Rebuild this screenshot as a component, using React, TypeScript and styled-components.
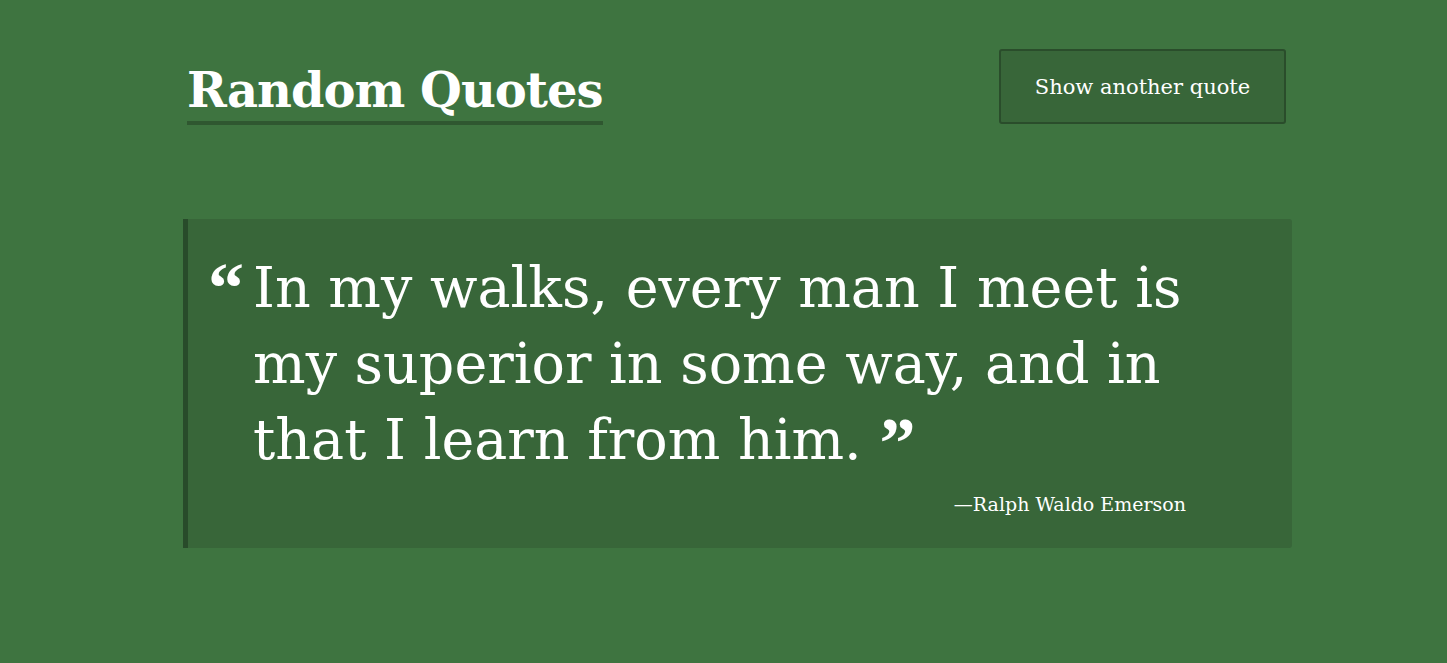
import React from "react";
import styled, { createGlobalStyle } from "styled-components";

const Global = createGlobalStyle`
  html, body { margin: 0; padding: 0; }
  body {
    background: #3e7440;
    color: #ffffff;
    font-family: "DejaVu Serif", "Liberation Serif", serif;
    min-height: 663px;
  }
`;

const Page = styled.div`
  width: 1109px;
  margin: 0 0 0 183px;
  padding-top: 49px;
  display: flex;
  flex-direction: column;
  gap: 94px;
`;

const Header = styled.header`
  display: flex;
  justify-content: space-between;
  align-items: flex-start;
  padding: 0 6px 0 4px;
`;

const Title = styled.h1`
  margin: 0;
  font-family: "DejaVu Serif", serif;
  font-weight: bold;
  font-size: 48px;
  line-height: 61px;
  letter-spacing: -1px;
  border-bottom: 4px solid #2f5730;
  padding-top: 11px;
`;

const Button = styled.button`
  width: 287px;
  height: 75px;
  background: #386639;
  border: 2px solid #2a4d2b;
  border-radius: 3px;
  color: #ffffff;
  font-family: "DejaVu Serif", serif;
  font-size: 21px;
  cursor: pointer;
`;

const Card = styled.blockquote`
  margin: 0;
  background: #386639;
  border-left: 5px solid #284b2a;
  border-radius: 0 3px 3px 0;
  padding: 31px 106px 33px 20px;
  display: flex;
  flex-direction: column;
`;

const QuoteRow = styled.div`
  display: flex;
  gap: 12px;
  align-items: flex-start;
`;

const Mark = styled.span`
  font-family: "Liberation Serif", serif;
  font-weight: bold;
  font-size: 72px;
  line-height: 76px;
  width: 33px;
  flex: none;
`;

const Text = styled.p`
  margin: 0;
  font-family: "DejaVu Serif", serif;
  font-size: 55.5px;
  line-height: 76px;
`;

const Close = styled.span`
  font-family: "Liberation Serif", serif;
  font-weight: bold;
  font-size: 72px;
  line-height: 66px;
  vertical-align: -8px;
`;

const Author = styled.cite`
  align-self: flex-end;
  font-style: normal;
  font-family: "DejaVu Serif", serif;
  font-size: 19px;
  margin-top: 15px;
`;

export default function App() {
  return (
    <>
      <Global />
      <Page>
        <Header>
          <Title>Random Quotes</Title>
          <Button>Show another quote</Button>
        </Header>
        <Card>
          <QuoteRow>
            <Mark>“</Mark>
            <Text>
              In my walks, every man I meet is my superior in some way, and in
              that I learn from him. <Close>”</Close>
            </Text>
          </QuoteRow>
          <Author>—Ralph Waldo Emerson</Author>
        </Card>
      </Page>
    </>
  );
}
